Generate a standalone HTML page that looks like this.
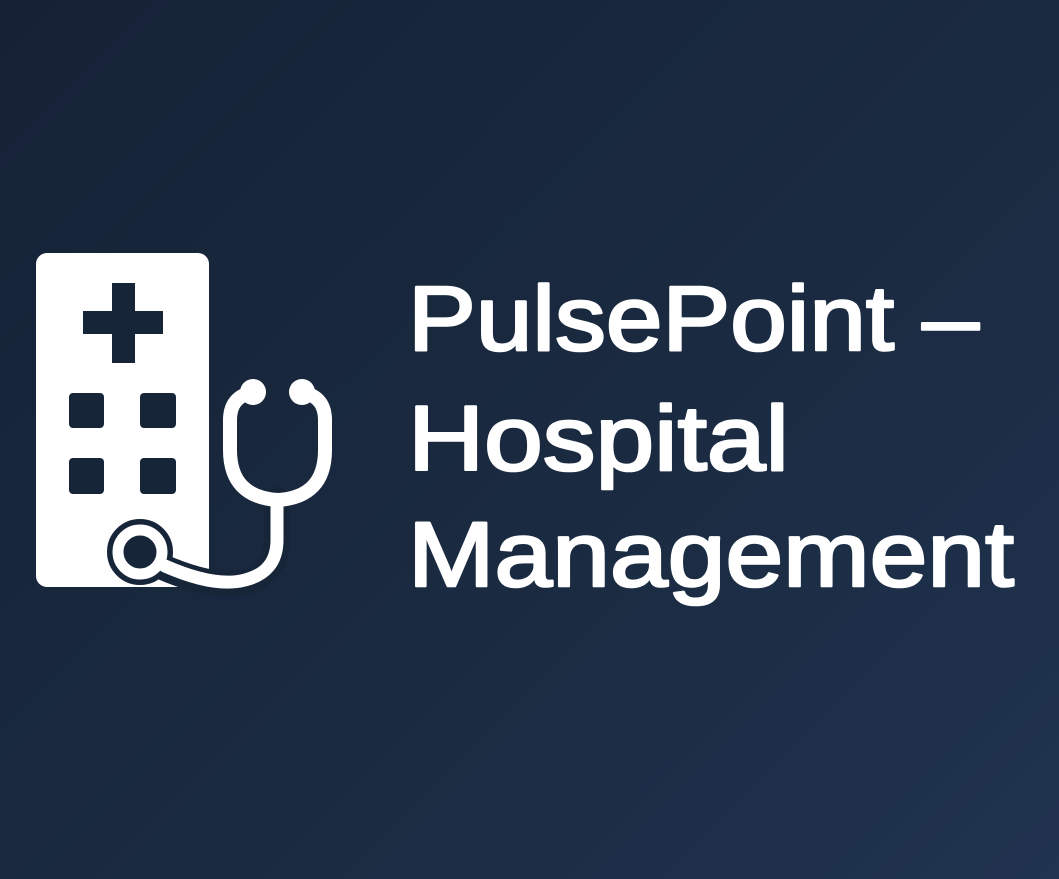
<!DOCTYPE html>
<html><head><meta charset="utf-8"><style>
html,body{margin:0;padding:0;width:1059px;height:879px;overflow:hidden}
body{background:linear-gradient(135deg,#152236 0%,#1a2a40 55%,#203350 100%)}
svg{display:block}
</style></head><body>
<svg width="1059" height="879" viewBox="0 0 1059 879" xmlns="http://www.w3.org/2000/svg">
<rect x="36" y="253" width="173" height="334" rx="11" fill="#fff"/>
<g fill="#172539">
<rect x="112" y="283" width="23" height="80"/>
<rect x="83" y="311" width="80" height="23"/>
<rect x="69" y="393" width="35" height="35" rx="4"/>
<rect x="140" y="393" width="36" height="35" rx="4"/>
<rect x="69" y="458" width="35" height="36" rx="4"/>
<rect x="140" y="458" width="36" height="36" rx="4"/>
</g>
<g fill="none" stroke-linecap="round">
<path d="M160 566 Q215 590 245 582 Q277 572 277 540 L277 500" stroke="#172539" stroke-width="26"/>
<circle cx="140" cy="552" r="26" fill="#172539" stroke="#172539" stroke-width="14"/>
<path d="M250 393 Q230 398 230 420 L230 450 Q230 497 278 500 Q325 497 325 450 L325 420 Q325 398 305 393" stroke="#fff" stroke-width="14"/>
<path d="M277 500 L277 540 Q277 572 245 580 Q215 588 165 566" stroke="#fff" stroke-width="13"/>
<circle cx="140" cy="552" r="22" fill="#172539" stroke="#fff" stroke-width="11"/>
</g>
<circle cx="253" cy="392" r="13" fill="#fff"/>
<circle cx="302" cy="392" r="13" fill="#fff"/>
<g fill="#fff" stroke="#fff" stroke-width="2.6" stroke-linejoin="round" font-family="Liberation Sans, Arial, sans-serif" font-size="92">
<text x="408" y="350" textLength="571" lengthAdjust="spacingAndGlyphs">PulsePoint –</text>
<text x="408" y="470" textLength="381" lengthAdjust="spacingAndGlyphs">Hospital</text>
<text x="408" y="586" textLength="606" lengthAdjust="spacingAndGlyphs">Management</text>
</g>
</svg>
</body></html>
